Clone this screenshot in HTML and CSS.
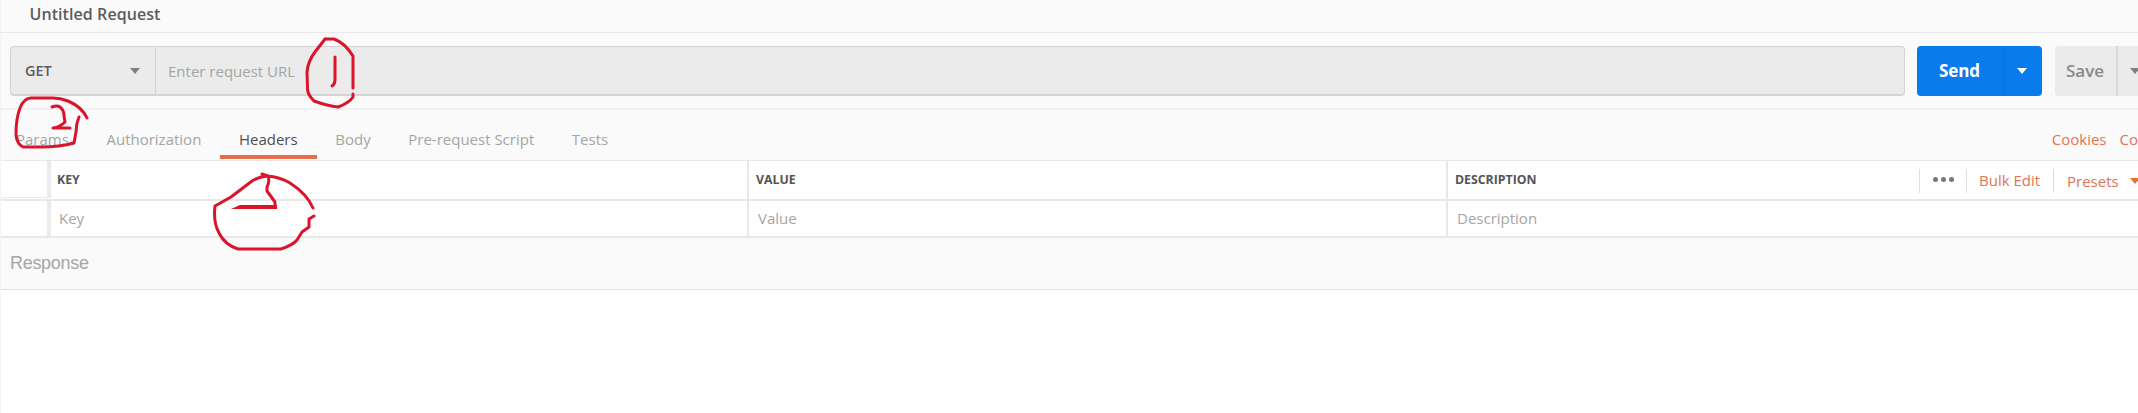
FILE: index.html
```html
<!DOCTYPE html>
<html lang="en">
<head>
<meta charset="utf-8">
<title>Untitled Request</title>
<link rel="stylesheet" href="styles.css">
</head>
<body>
<div class="app">
  <header class="title">Untitled Request</header>
  <section class="request">
    <div class="urlbar">
      <div class="method"><span>GET</span><i class="caret"></i></div>
      <div class="url">Enter request URL</div>
    </div>
    <div class="send"><span class="send-label">Send</span><span class="send-more"><i class="caret"></i></span></div>
    <div class="save"><span class="save-label">Save</span><span class="save-more"><i class="caret"></i></span></div>
  </section>
  <nav class="tabs">
    <span class="tab">Params</span>
    <span class="tab">Authorization</span>
    <span class="tab active">Headers</span>
    <span class="tab">Body</span>
    <span class="tab">Pre-request Script</span>
    <span class="tab">Tests</span>
    <div class="links"><span>Cookies</span><span>Co</span></div>
  </nav>
  <div class="row head">
    <div class="check"></div>
    <div class="cell">KEY</div>
    <div class="cell">VALUE</div>
    <div class="cell last">DESCRIPTION
      <div class="tools">
        <span class="more"><i></i><i></i><i></i></span>
        <span class="bulk">Bulk Edit</span>
        <span class="presets">Presets<i class="caret"></i></span>
      </div>
    </div>
  </div>
  <div class="row entry">
    <div class="check"></div>
    <div class="cell">Key</div>
    <div class="cell">Value</div>
    <div class="cell last">Description</div>
  </div>
  <section class="response">Response</section>
  <main class="empty"></main>
  <svg class="ink" width="340" height="260" viewBox="0 0 340 260">
    <path d="M325 39H334Q345 43 353 56V88M353 94V97Q349 103 338 107Q328 106 314 101Q307 94 307.500 88L307 72Q308 61 315 52L325 39M335 57V80Q335 84 332 86" />
    <path d="M87 118Q82 107 68 101Q60 98 53 98H31Q24 98 20 108Q16 118 16 135Q17 144 23 147H40Q60 147 74 143L76 132Q76 124 79 117M52 107Q57 105 60 107Q64 110 64 116L65 122Q60 127 53 128H70" />
    <path d="M313 208Q307 194 290 183Q280 177 267 176Q258 177 252 181L231 197L215 206Q213 222 219 233Q225 245 238 249H281Q293 245 297 240L302 232L309 227V219L314 216M262 174L268 176Q270 181 267 187V191L275 202V207H240" />
    <path class="fill" d="M231 209L240 205H277V209Z" />
  </svg>
</div>
</body>
</html>
```
FILE: styles.css
```css
* { box-sizing: border-box; }
body { margin: 0; background: #fff; overflow: hidden; font: 15px/20px "Open Sans", sans-serif; color: #a5a5a5; }
.app { position: relative; width: 2138px; height: 413px; overflow: hidden; display: flex; flex-direction: column; border-left: 1px solid #f4f4f4; background: #fafafa; }
.title { height: 33px; padding: 4px 0 0 28.500px; border-bottom: 1px solid #e8e8e8; font-size: 16px; font-weight: 600; letter-spacing: .07px; color: #5c5c5c; }
.request { height: 77px; padding: 13px 0 0 9px; display: flex; border-bottom: 2px solid #f1f1f1; }
.urlbar { display: flex; flex: none; width: 1895px; height: 50px; border: 1px solid #d4d4d4; border-bottom-width: 2px; border-radius: 4px; background: #ebebeb; line-height: 48px; }
.method { width: 145px; padding: 0 15px 0 14px; display: flex; justify-content: space-between; align-items: center; border-right: 1px solid #d4d4d4; font-weight: 600; font-size: 14.500px; color: #5c5c5c; }
.caret { display: block; border: 5px solid transparent; border-top: 6px solid #808080; border-bottom: 0; }
.url { padding-left: 12px; }
.send { display: flex; flex: none; width: 125px; height: 50px; margin-left: 12px; border-radius: 4px; background: #097bed; color: #fff; line-height: 50px; font-size: 17px; font-weight: 700; letter-spacing: -.1px; }
.send-label { width: 87px; padding-left: 22px; border-right: 1px solid #0b70db; }
.send-more { flex: 1; display: flex; align-items: center; padding-left: 13px; }
.send .caret { border-top-color: #fff; }
.save { display: flex; flex: none; width: 110px; height: 50px; margin-left: 13px; border-radius: 4px; background: #ebebeb; color: #888; line-height: 50px; font-size: 17px; font-weight: 600; }
.save-label { width: 63px; padding-left: 11px; border-right: 2px solid #dadada; }
.save-more { flex: 1; display: flex; align-items: center; padding-left: 12px; }
.tabs { height: 51px; padding-left: 15px; display: flex; gap: 37.600px; border-bottom: 1px solid #e8e8e8; line-height: 58px; white-space: nowrap; }
.active { margin: 0 -19px; padding: 0 19px; height: 49px; border-bottom: 4px solid #e56f4c; color: #505050; }
.links { margin-left: auto; margin-right: 0; display: flex; gap: 13px; color: #e17453; }
.row { display: flex; background: #fff; border-bottom: 2px solid #e8e8e8; }
.head { height: 40px; font-size: 12.300px; font-weight: 700; color: #555; line-height: 38px; }
.entry { height: 37px; line-height: 34px; }
.check { width: 50px; border-right: 4px solid #ebebeb; }
.head .check { height: 37px; border-bottom: 1px solid #ebebeb; }
.cell { width: 699px; padding-left: 7px; border-right: 2px solid #e8e8e8; }
.cell:nth-child(2) { width: 698px; padding-left: 6px; }
.entry .cell { padding-left: 9px; }
.entry .cell:nth-child(2) { padding-left: 8px; }
.last { flex: 1; display: flex; border: 0; }
.tools { margin-left: auto; margin-top: 8px; height: 24px; display: flex; font-size: 15px; font-weight: 400; line-height: 23px; color: #e17453; }
.tools > span { border-left: 1px solid #dedede; }
.more { width: 47px; display: flex; gap: 3px; padding: 8px 0 0 13px; }
.more i { width: 5px; height: 5px; border-radius: 50%; background: #777; }
.bulk { width: 87px; padding-left: 12px; }
.presets { width: 85px; padding-left: 13px; display: flex; align-items: center; gap: 11px; }
.presets .caret { border-top-color: #e56f2f; }
.response { height: 52px; padding-left: 9px; border-bottom: 1px solid #e2e2e2; line-height: 50px; font-family: "Liberation Sans", sans-serif; font-size: 18px; letter-spacing: -.3px; }
.empty { flex: 1; background: #fff; }
.ink { position: absolute; left: -1px; top: 0; overflow: visible; fill: none; stroke: #db142b; stroke-width: 3; stroke-linecap: round; stroke-linejoin: round; }
.fill { fill: #db142b; stroke: none; }
```
